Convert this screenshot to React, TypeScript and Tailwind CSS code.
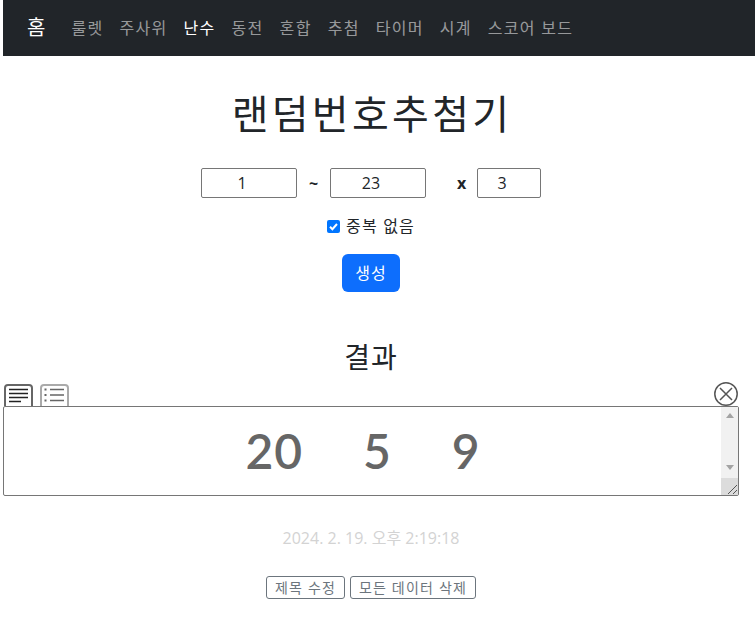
import React from "react";

const font = "font-['Open_Sans','Noto_Sans_CJK_KR',sans-serif]";

const menus = ["룰렛", "주사위", "난수", "동전", "혼합", "추첨", "타이머", "시계", "스코어 보드"];

function NumberBox({value, className}: {value: string; className: string}) {
    return (
        <input
            readOnly
            value={value}
            className={"h-[30px] rounded-[2px] border border-[#767676] bg-white pr-[14px] text-center text-[16px] text-[#212529] outline-none " + className}
        />
    );
}

export default function App() {
    return (
        <div className={"relative h-[623px] w-[755px] overflow-hidden bg-white pl-[3px] text-[#212529] " + font}>
            <nav className="flex h-[56px] w-[752px] items-center bg-[#212529] pl-[24px]">
                <span className="mr-[26px] text-[20px] text-white">홈</span>
                <div className="flex gap-[16px] text-[16px] tracking-[1.300px] text-[#ffffff8c]">
                    {menus.map((m) => (
                        <span key={m} className={m === "난수" ? "text-white" : ""}>{m}</span>
                    ))}
                </div>
            </nav>

            <div className="w-[736px]">
                <h1 className="mt-[34px] pl-[2px] text-center text-[40px] leading-[48px] tracking-[3.300px] font-normal">랜덤번호추첨기</h1>

                <div className="mt-[30px] flex items-center pl-[198px]">
                    <NumberBox value="1" className="w-[96px]"/>
                    <span className="w-[33px] text-center text-[16px] font-bold">~</span>
                    <NumberBox value="23" className="w-[96px]"/>
                    <span className="w-[51px] pl-[20px] text-center text-[16px] font-bold">x</span>
                    <NumberBox value="3" className="w-[64px]"/>
                </div>

                <div className="mt-[16px] flex items-center justify-center gap-[6px] text-[16px] leading-[24px] tracking-[1.200px]">
                    <span className="flex h-[13px] w-[13px] items-center justify-center rounded-[2px] bg-[#0075ff]">
                        <svg width="11" height="11" viewBox="0 0 11 11" fill="none">
                            <path d="M2 5.800 4.400 8.200 9 3" stroke="white" strokeWidth="2"/>
                        </svg>
                    </span>
                    <span>중복 없음</span>
                </div>

                <div className="mt-[16px] flex justify-center">
                    <button className="h-[38px] w-[58px] rounded-[6px] bg-[#0d6efd] text-[16px] tracking-[1px] text-white">생성</button>
                </div>

                <h2 className="mt-[46px] text-center text-[28px] leading-[38px] tracking-[1px] font-normal">결과</h2>

                <div className="relative mt-[8px] flex h-[22px] items-end pl-[1px]">
                    <svg width="29" height="22" viewBox="0 0 29 22" fill="none" className="mr-[7px]">
                        <path d="M1 22V4a3 3 0 0 1 3-3h21a3 3 0 0 1 3 3v18" stroke="#666" strokeWidth="2"/>
                        <path d="M5 5.500h19M5 9.500h19M5 13.500h19M5 17.500h12" stroke="#222" strokeWidth="1.500"/>
                    </svg>
                    <svg width="29" height="22" viewBox="0 0 29 22" fill="none">
                        <path d="M1 22V4a3 3 0 0 1 3-3h21a3 3 0 0 1 3 3v18" stroke="#aaa" strokeWidth="2"/>
                        <path d="M10 5.500h14M10 11h14M10 16.500h14" stroke="#666" strokeWidth="1.500"/>
                        <path d="M4.500 5.500h2M4.500 11h2M4.500 16.500h2" stroke="#666" strokeWidth="2"/>
                    </svg>
                    <svg width="24" height="24" viewBox="0 0 24 24" fill="none" className="absolute right-[1px] top-[-2px]">
                        <circle cx="12" cy="12" r="11.200" stroke="#555" strokeWidth="1.500"/>
                        <path d="M6 6 18 18M18 6 6 18" stroke="#555" strokeWidth="1.500"/>
                    </svg>
                </div>

                <div className="flex h-[90px] rounded-[2px] border border-[#767676]">
                    <div className="flex-1 pt-[15px] pl-[1px] text-center font-['Lato',sans-serif] text-[48px] leading-[58px] font-semibold tracking-[1px] whitespace-pre text-[#666666] [word-spacing:7px]">
                        {"20   5   9"}
                    </div>
                    <div className="flex w-[17px] flex-col items-center justify-between bg-[#f1f1f1]">
                        <div className="flex h-[17px] items-center">
                            <span className="h-0 w-0 border-x-[4px] border-b-[5px] border-x-transparent border-b-[#a3a3a3]"/>
                        </div>
                        <div className="flex flex-col items-center">
                            <div className="flex h-[22px] items-center">
                                <span className="h-0 w-0 border-x-[4px] border-t-[5px] border-x-transparent border-t-[#a3a3a3]"/>
                            </div>
                            <div className="h-[17px] w-full bg-[#dcdcdc]">
                                <svg width="17" height="17" viewBox="0 0 17 17" fill="none">
                                    <path d="M7 16 16 7M12 16 16 12" stroke="#555" strokeWidth="1"/>
                                </svg>
                            </div>
                        </div>
                    </div>
                </div>

                <p className="mt-[30px] text-center text-[16px] leading-[24px] text-[#d3d3d3]">2024. 2. 19. 오후 2:19:18</p>

                <div className="mt-[26px] flex justify-center gap-[5px] text-[14px] tracking-[1.200px]">
                    <button className="h-[23px] w-[79px] rounded-[3px] border border-[#6c757d] text-[#6c757d]">제목 수정</button>
                    <button className="h-[23px] w-[126px] rounded-[3px] border border-[#6c757d] text-[#6c757d]">모든 데이터 삭제</button>
                </div>
            </div>
        </div>
    );
}
